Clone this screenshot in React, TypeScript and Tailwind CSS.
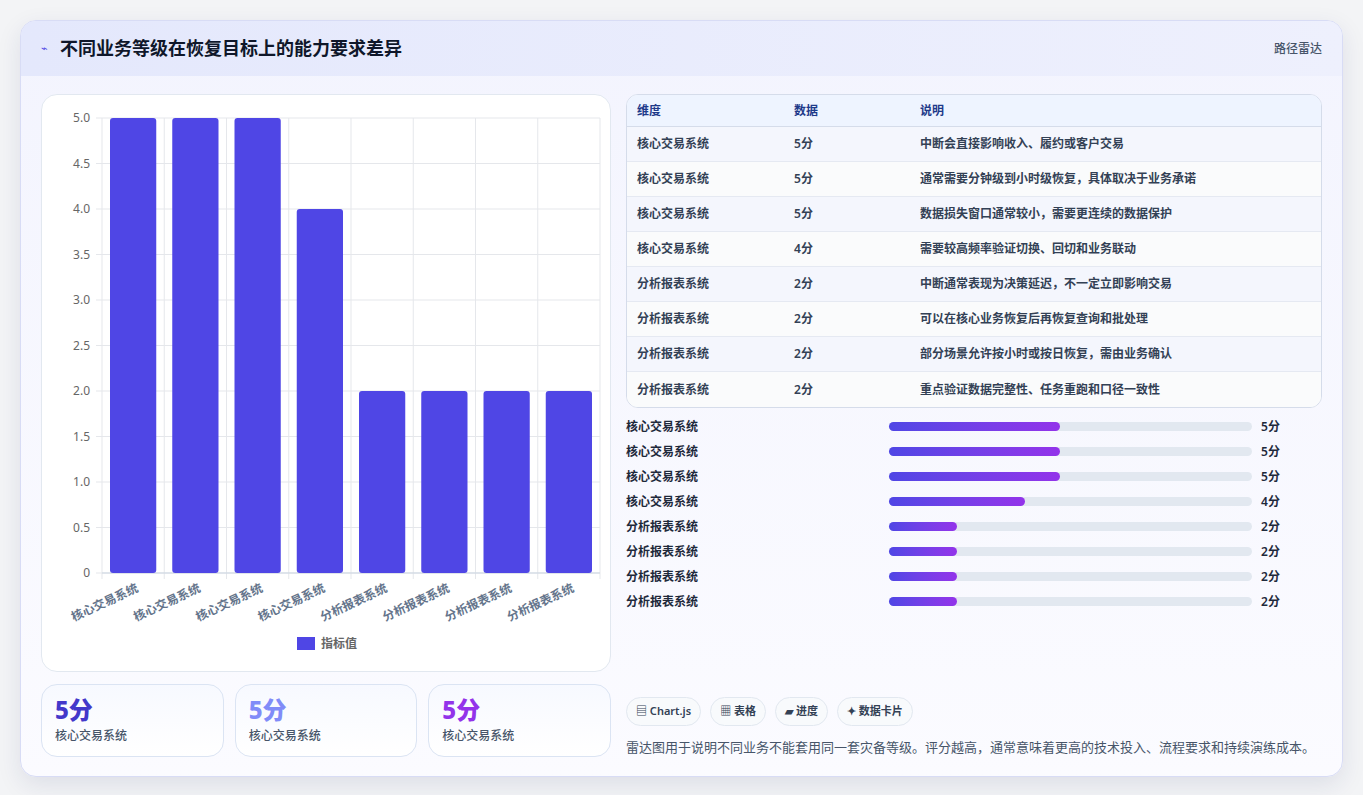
import React from 'react';

const rows = [
  { name: '核心交易系统', v: 5, d: '中断会直接影响收入、履约或客户交易' },
  { name: '核心交易系统', v: 5, d: '通常需要分钟级到小时级恢复，具体取决于业务承诺' },
  { name: '核心交易系统', v: 5, d: '数据损失窗口通常较小，需要更连续的数据保护' },
  { name: '核心交易系统', v: 4, d: '需要较高频率验证切换、回切和业务联动' },
  { name: '分析报表系统', v: 2, d: '中断通常表现为决策延迟，不一定立即影响交易' },
  { name: '分析报表系统', v: 2, d: '可以在核心业务恢复后再恢复查询和批处理' },
  { name: '分析报表系统', v: 2, d: '部分场景允许按小时或按日恢复，需由业务确认' },
  { name: '分析报表系统', v: 2, d: '重点验证数据完整性、任务重跑和口径一致性' },
];

const font = { fontFamily: '"Noto Sans", "Noto Sans CJK SC", sans-serif' };

function BarChart() {
  const x0 = 60, x1 = 558, y0 = 23, y1 = 478;
  const cw = (x1 - x0) / 8;
  const unit = (y1 - y0) / 5;
  const ticks = [0, 0.5, 1, 1.5, 2, 2.5, 3, 3.5, 4, 4.5, 5];
  return (
    <svg width="570" height="576" className="block">
      {ticks.map((t) => {
        const y = y1 - t * unit;
        return (
          <g key={t}>
            <line x1={x0 - 6} x2={x1} y1={y} y2={y} stroke="#e5e7eb" strokeWidth="1" />
            <text x={x0 - 12} y={y + 4} textAnchor="end" fontSize="12" fill="#666" style={font}>
              {t === 0 ? '0' : t.toFixed(1)}
            </text>
          </g>
        );
      })}
      {Array.from({ length: 9 }).map((_, i) => (
        <line key={i} x1={x0 + i * cw} x2={x0 + i * cw} y1={y0} y2={y1 + 6} stroke="#e5e7eb" />
      ))}
      <line x1={x0} x2={x1} y1={y1} y2={y1} stroke="#cbd5e1" />
      {rows.map((r, i) => {
        const bx = x0 + i * cw + 8;
        const h = r.v * unit;
        return <rect key={i} x={bx} y={y1 - h} width={cw - 16} height={h} rx="3" fill="#4f46e5" />;
      })}
      {rows.map((r, i) => {
        const cx = x0 + (i + 0.5) * cw + 6;
        return (
          <text
            key={i}
            x={cx}
            y={y1 + 18}
            textAnchor="end"
            fontSize="12"
            fontWeight="700"
            fill="#64748b"
            transform={`rotate(-25 ${cx} ${y1 + 18})`}
            style={font}
          >
            {r.name}
          </text>
        );
      })}
      <rect x="255" y="542" width="18" height="13" fill="#4f46e5" />
      <text x="279" y="553" fontSize="12" fill="#666" fontWeight="600" style={font}>指标值</text>
    </svg>
  );
}

export default function App() {
  return (
    <div className="min-h-screen bg-[#f3f4f6] p-5" style={font}>
      <div className="overflow-hidden rounded-2xl border border-[#d8dcf5] bg-gradient-to-b from-[#f3f4fe] to-[#fbfbff] shadow-[0_8px_24px_rgba(30,41,99,0.10)]">
        <div className="flex h-[55px] items-center justify-between bg-gradient-to-r from-[#e4e8fc] to-[#eef0fd] px-5">
          <div className="flex items-center gap-3">
            <span className="text-[11px] text-[#4f46e5]">⌁</span>
            <h1 className="text-[18px] font-bold text-[#0f172a]">不同业务等级在恢复目标上的能力要求差异</h1>
          </div>
          <span className="text-[12px] font-medium text-[#475569]">路径雷达</span>
        </div>
        <div className="flex gap-[15px] px-5 pt-[18px] pb-[19px]">
          <div className="flex w-[570px] flex-col gap-[12px]">
            <div className="h-[578px] rounded-2xl border border-[#e2e8f0] bg-white">
              <BarChart />
            </div>
            <div className="flex gap-[11px]">
              {['text-[#4338ca]', 'text-[#818cf8]', 'text-[#9333ea]'].map((c, i) => (
                <div key={i} className="h-[73px] w-[183px] rounded-2xl border border-[#dbe4f3] bg-gradient-to-b from-[#f7f9ff] to-white px-[13px] pt-[9px]">
                  <div className={`text-[24px] font-extrabold leading-[32px] ${c}`}>5分</div>
                  <div className="mt-[1px] text-[12px] font-medium text-[#475569]">核心交易系统</div>
                </div>
              ))}
            </div>
          </div>
          <div className="flex flex-1 flex-col">
            <div className="overflow-hidden rounded-xl border border-[#d5dcea] bg-white">
              <div className="flex h-[32px] items-center border-b border-[#d5dcea] bg-[#eef4ff] text-[12px] font-semibold text-[#1e3a8a]">
                <div className="w-[167px] pl-[10px]">维度</div>
                <div className="w-[126px]">数据</div>
                <div>说明</div>
              </div>
              {rows.map((r, i) => (
                <div key={i} className={`flex h-[35px] items-center text-[12px] font-semibold text-[#334155] ${i < 7 ? 'border-b border-[#e5e9f2]' : ''} ${i % 2 === 0 ? 'bg-[#f4f6fd]' : 'bg-[#fafbfc]'}`}>
                  <div className="w-[167px] pl-[10px]">{r.name}</div>
                  <div className="w-[126px]">{r.v}分</div>
                  <div>{r.d}</div>
                </div>
              ))}
            </div>
            <div className="mt-[9px] flex flex-col gap-[6px]">
              {rows.map((r, i) => (
                <div key={i} className="flex h-[19px] items-center text-[12px] font-semibold text-[#1e293b]">
                  <div className="w-[263px]">{r.name}</div>
                  <div className="h-[9px] w-[363px] rounded-full bg-[#e2e8f0]">
                    <div className="h-full rounded-full bg-gradient-to-r from-[#4f46e5] to-[#9333ea]" style={{ width: `${r.v * 9.4}%` }} />
                  </div>
                  <div className="ml-[9px]">{r.v}分</div>
                </div>
              ))}
            </div>
            <div className="mt-auto flex gap-[9px]">
              {['▤ Chart.js', '▦ 表格', '▰ 进度', '✦ 数据卡片'].map((t) => (
                <span key={t} className="flex h-[29px] items-center rounded-full border border-[#e2e8f0] bg-[#f8fafc] px-[9px] text-[11px] font-semibold text-[#334155]">
                  {t}
                </span>
              ))}
            </div>
            <p className="mt-[12px] text-[13px] text-[#475569]">雷达图用于说明不同业务不能套用同一套灾备等级。评分越高，通常意味着更高的技术投入、流程要求和持续演练成本。</p>
          </div>
        </div>
      </div>
    </div>
  );
}
